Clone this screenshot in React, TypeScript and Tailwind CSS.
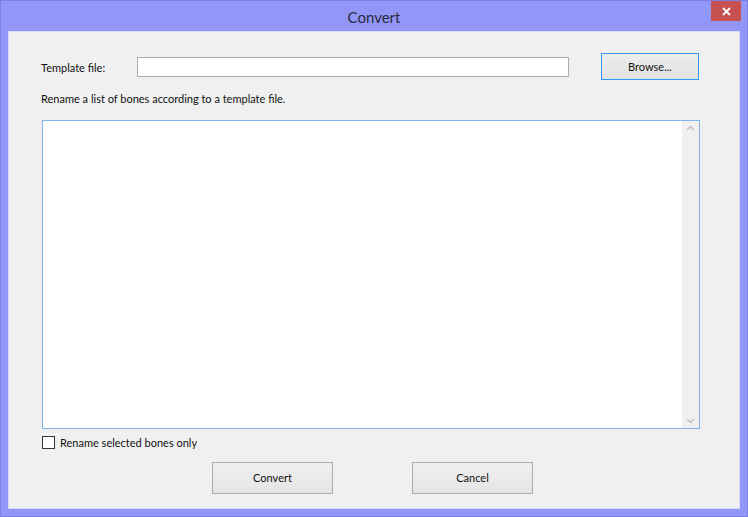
import React from "react";

export default function App() {
  const font = { fontFamily: '"Segoe UI", Lato, "Liberation Sans", sans-serif' };
  return (
    <div className="w-[748px] h-[517px] bg-[#9296f7] border border-[#7d80e0] flex flex-col" style={font}>
      <div className="h-[30px] flex items-start relative">
        <div className="flex-1 text-center text-[15px] text-[#2b2b3b] pt-[5px]">Convert</div>
        <div className="absolute right-[6px] top-0 w-[30px] h-[20px] bg-[#c75050] flex items-center justify-center">
          <svg width="9" height="9" viewBox="0 0 9 9">
            <path d="M1 1 L8 8 M8 1 L1 8" stroke="#fff" strokeWidth="1.8" />
          </svg>
        </div>
      </div>
      <div className="mx-[7px] mb-[7px] flex-1 bg-[#f0f0f0] border border-[#d8daf8] flex flex-col text-[11px] text-[#111] pl-[32px] pr-[40px]">
        <div className="flex items-center mt-[21px] h-[27px]">
          <div className="w-[96px] pt-[3px]">Template file:</div>
          <div className="w-[432px] h-[20px] bg-white border border-[#adadad]" />
          <div className="flex-1" />
          <div className="w-[98px] h-[27px] border border-[#3399ff] bg-gradient-to-b from-[#ececec] to-[#e3e3e3] flex items-center justify-center pt-[1px]">Browse...</div>
        </div>
        <div className="mt-[11px] h-[15px] leading-[15px]">Rename a list of bones according to a template file.</div>
        <div className="mt-[14px] ml-[1px] mr-[-1px] h-[309px] bg-white border border-[#7eb4ea] flex justify-end">
          <div className="w-[17px] bg-[#f0f0f0] flex flex-col justify-between items-center py-[4px]">
            <svg width="9" height="6" viewBox="0 0 9 6"><path d="M1 5 L4.5 1.5 L8 5" stroke="#c2c2c2" strokeWidth="1.5" fill="none" /></svg>
            <svg width="9" height="6" viewBox="0 0 9 6"><path d="M1 1 L4.5 4.5 L8 1" stroke="#c2c2c2" strokeWidth="1.5" fill="none" /></svg>
          </div>
        </div>
        <div className="flex items-center mt-[7px] ml-[1px] h-[13px]">
          <div className="w-[13px] h-[13px] bg-white border border-[#333]" />
          <div className="ml-[5px] pt-[2px]">Rename selected bones only</div>
        </div>
        <div className="flex gap-[79px] mt-[13px] ml-[171px]">
          <div className="w-[121px] h-[32px] border border-[#adadad] bg-gradient-to-b from-[#efefef] to-[#e5e5e5] flex items-center justify-center">Convert</div>
          <div className="w-[121px] h-[32px] border border-[#adadad] bg-gradient-to-b from-[#efefef] to-[#e5e5e5] flex items-center justify-center">Cancel</div>
        </div>
      </div>
    </div>
  );
}
